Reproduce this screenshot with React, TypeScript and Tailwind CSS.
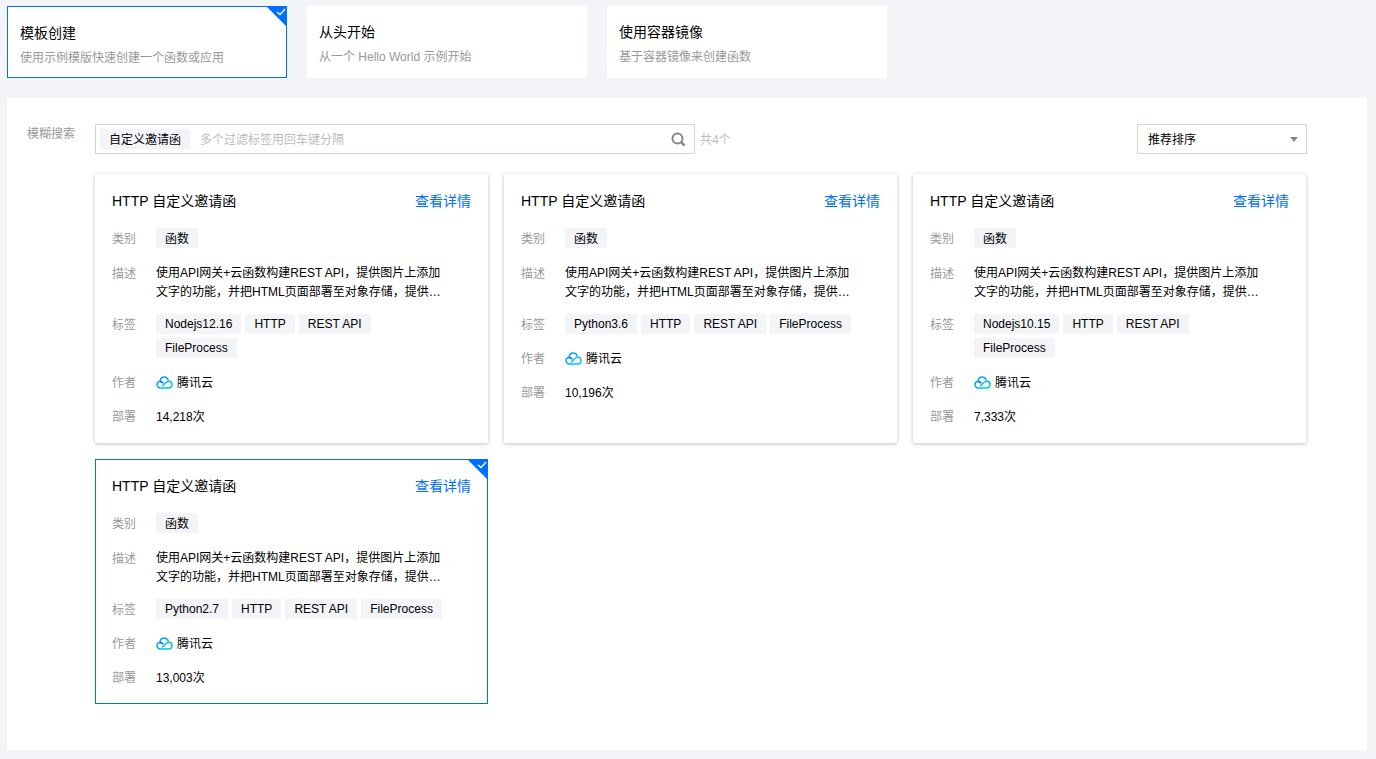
const DESC =
  "使用API网关+云函数构建REST API，提供图片上添加文字的功能，并把HTML页面部署至对象存储，提供访问链接和示例页面";

const MODES = [
  { title: "模板创建", sub: "使用示例模版快速创建一个函数或应用", selected: true },
  { title: "从头开始", sub: "从一个 Hello World 示例开始", selected: false },
  { title: "使用容器镜像", sub: "基于容器镜像来创建函数", selected: false },
];

const TEMPLATES = [
  { tags: ["Nodejs12.16", "HTTP", "REST API", "FileProcess"], count: "14,218次", selected: false },
  { tags: ["Python3.6", "HTTP", "REST API", "FileProcess"], count: "10,196次", selected: false },
  { tags: ["Nodejs10.15", "HTTP", "REST API", "FileProcess"], count: "7,333次", selected: false },
  { tags: ["Python2.7", "HTTP", "REST API", "FileProcess"], count: "13,003次", selected: true },
];

function Corner() {
  return (
    <div className="absolute right-[-1px] top-[-1px] h-0 w-0 border-l-[21px] border-t-[21px] border-l-transparent border-t-[#006eff]">
      <svg className="absolute right-[1px] top-[-19px]" width="10" height="8" viewBox="0 0 10 8" fill="none">
        <path d="M1 4l3 2.6L9 1" stroke="#fff" strokeWidth="1.4" />
      </svg>
    </div>
  );
}

function CloudLogo() {
  return (
    <svg width="17" height="13" viewBox="0 0 17 13" fill="none">
      <path d="M4.2 12H12.6C14.6 12 16 10.6 16 8.6C16 6.7 14.6 5.2 12.8 5.2C11.6 5.2 10.8 5.8 9.8 6.7L6 10.2" stroke="#00c8dc" strokeWidth="1.5" />
      <path d="M4.4 12C2.4 12 1 10.5 1 8.6C1 6.8 2.4 5.4 4 5.4C4.2 2.8 6 1 8.2 1C10.2 1 11.8 2.5 12.4 4.6" stroke="#00a4ff" strokeWidth="1.5" />
      <path d="M4 5.4C5.4 5.4 6.4 6.1 7.4 7.2" stroke="#006eff" strokeWidth="1.5" />
    </svg>
  );
}

function Tag({ children, cjk }: { children: React.ReactNode; cjk?: boolean }) {
  return (
    <span
      className={
        cjk
          ? "inline-flex h-5 items-center bg-[#f2f4f8] px-[9px] pt-[2px] text-xs leading-[18px] text-black"
          : "inline-flex h-5 items-center bg-[#f2f4f8] px-[9px] text-xs leading-5 text-black"
      }
    >
      {children}
    </span>
  );
}

function Row({ label, children }: { label: string; children: React.ReactNode }) {
  return (
    <div className="flex">
      <div className="h-5 w-11 shrink-0 text-xs leading-[22px] text-[#999]">{label}</div>
      <div className="flex min-w-0 flex-1">{children}</div>
    </div>
  );
}

function TemplateCard({ tags, count, selected }: { tags: string[]; count: string; selected: boolean }) {
  return (
    <div
      className={
        selected
          ? "relative border border-[#006eff] bg-white p-4"
          : "relative border border-transparent bg-white p-4 shadow-[0_1px_4px_0_rgba(0,0,0,0.25)]"
      }
    >
      {selected && <Corner />}
      <div className="flex items-center justify-between text-sm leading-5">
        <span className="text-black">HTTP 自定义邀请函</span>
        <a className="text-[#006eff]">查看详情</a>
      </div>
      <div className="mt-[17px]">
        <Row label="类别">
          <Tag cjk>函数</Tag>
        </Row>
      </div>
      <div className="mt-[15px]">
        <Row label="描述">
          <p className="line-clamp-2 w-[288px] pt-px text-xs leading-[19px] text-black">{DESC}</p>
        </Row>
      </div>
      <div className="mt-[12px]">
        <Row label="标签">
          <div className="flex w-[288px] flex-wrap gap-1">
            {tags.map((t) => (
              <Tag key={t}>{t}</Tag>
            ))}
          </div>
        </Row>
      </div>
      <div className="mt-[14px]">
        <Row label="作者">
          <div className="flex h-5 items-center gap-1 text-xs text-black">
            <CloudLogo />
            <span className="pt-[2px] leading-[18px]">腾讯云</span>
          </div>
        </Row>
      </div>
      <div className="mt-[14px]">
        <Row label="部署">
          <div className="h-5 text-xs leading-[22px] text-black">{count}</div>
        </Row>
      </div>
    </div>
  );
}

export default function App() {
  return (
    <div className="min-h-screen bg-[#f2f4f8] pb-[9px] pl-[7px] pr-[9px] pt-[6px] font-['Liberation_Sans','Noto_Sans_CJK_SC',sans-serif]">
      {/* Mode cards */}
      <div className="flex gap-5">
        {MODES.map((m) => (
          <div
            key={m.title}
            className={
              m.selected
                ? "relative h-[72px] w-[280px] border border-[#006eff] bg-white px-3 pt-4"
                : "relative h-[72px] w-[280px] bg-white px-3 pt-4"
            }
          >
            {m.selected && <Corner />}
            <div className="text-sm leading-5 text-black">{m.title}</div>
            <div className="mt-[6px] text-xs leading-[18px] text-[#999]">{m.sub}</div>
          </div>
        ))}
      </div>

      {/* Template panel */}
      <div className="mt-5 h-[652px] bg-white pl-5 pr-[60px] pt-[26px]">
        <div className="flex items-center">
          <div className="w-[68px] self-start text-xs leading-5 text-[#999]">模糊搜索</div>
          <div className="flex h-[30px] w-[600px] items-center border border-[#cfd5de] pl-1 pr-2">
            <Tag cjk>自定义邀请函</Tag>
            <input
              className="ml-[10px] mt-[2px] min-w-0 flex-1 bg-transparent text-xs outline-none placeholder:text-[#bbb]"
              placeholder="多个过滤标签用回车键分隔"
            />
            <svg width="15" height="15" viewBox="0 0 15 15" fill="none">
              <circle cx="6.5" cy="6.5" r="5" stroke="#888" strokeWidth="2" />
              <path d="M10.2 10.2L13.6 13.6" stroke="#888" strokeWidth="2.6" />
            </svg>
          </div>
          <span className="ml-[5px] pt-[2px] text-xs text-[#bbb]">共4个</span>
          <div className="ml-auto flex h-[30px] w-[170px] items-center justify-between border border-[#cfd5de] pl-[10px] pr-2 pt-[2px] text-xs text-black">
            推荐排序
            <span className="mb-[2px] h-0 w-0 border-x-4 border-t-[5px] border-x-transparent border-t-[#888]" />
          </div>
        </div>

        <div className="ml-[68px] mt-5 grid grid-cols-[repeat(3,393px)] gap-4">
          {TEMPLATES.map((t) => (
            <TemplateCard key={t.tags[0]} {...t} />
          ))}
        </div>
      </div>
    </div>
  );
}
